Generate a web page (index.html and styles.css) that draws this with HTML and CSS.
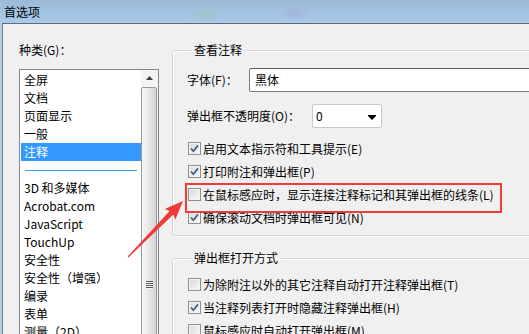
FILE: index.html
```html
<!DOCTYPE html>
<html lang="zh-CN">
<head>
<meta charset="utf-8">
<title>首选项</title>
<link rel="stylesheet" href="styles.css">
</head>
<body>
<div class="window">
  <div class="titlebar"><span class="title">首选项</span></div>
  <div class="frame">
    <div class="dialog">
      <div class="left">
        <div class="label">种类(G)：</div>
        <div class="listbox">
          <ul class="items">
            <li>全屏</li>
            <li>文档</li>
            <li>页面显示</li>
            <li>一般</li>
            <li class="selected">注释</li>
            <li class="sep"><span class="sep-line"></span></li>
            <li>3D 和多媒体</li>
            <li>Acrobat.com</li>
            <li>JavaScript</li>
            <li>TouchUp</li>
            <li>安全性</li>
            <li>安全性（增强）</li>
            <li>编录</li>
            <li>表单</li>
            <li>测量（2D）</li>
          </ul>
          <div class="scrollbar">
            <div class="sb-up"><svg width="7" height="4" viewBox="0 0 7 4"><path d="M3.5 0 L7 4 L0 4 Z" fill="#3a3a3a"/></svg></div>
            <div class="sb-thumb"><span class="grip"></span></div>
          </div>
        </div>
      </div>
      <div class="right">
        <fieldset class="group g1">
          <legend>查看注释</legend>
          <div class="field-row font-row">
            <span class="flabel w1">字体(F)：</span>
            <div class="textbox">黑体</div>
          </div>
          <div class="field-row opacity-row">
            <span class="flabel w2">弹出框不透明度(O)：</span>
            <div class="select"><span>0</span><svg class="dd" width="8" height="5" viewBox="0 0 8 5"><path d="M0 0 H8 V1 L4 5 L0 1 Z" fill="#000"/></svg></div>
          </div>
          <div class="cbs">
            <div class="cb-row"><span class="cb checked"><svg viewBox="0 0 11 11"><path d="M2 5.5 L4.4 8.2 L9 2.4" fill="none" stroke="#44598c" stroke-width="1.7"/></svg></span><span>启用文本指示符和工具提示(E)</span></div>
            <div class="cb-row"><span class="cb checked"><svg viewBox="0 0 11 11"><path d="M2 5.5 L4.4 8.2 L9 2.4" fill="none" stroke="#44598c" stroke-width="1.7"/></svg></span><span>打印附注和弹出框(P)</span></div>
            <div class="cb-row"><span class="cb"></span><span>在鼠标感应时，显示连接注释标记和其弹出框的线条(L)</span></div>
            <div class="cb-row"><span class="cb checked"><svg viewBox="0 0 11 11"><path d="M2 5.5 L4.4 8.2 L9 2.4" fill="none" stroke="#44598c" stroke-width="1.7"/></svg></span><span>确保滚动文档时弹出框可见(N)</span></div>
          </div>
        </fieldset>
        <fieldset class="group g2">
          <legend>弹出框打开方式</legend>
          <div class="cbs">
            <div class="cb-row"><span class="cb"></span><span>为除附注以外的其它注释自动打开注释弹出框(T)</span></div>
            <div class="cb-row"><span class="cb checked"><svg viewBox="0 0 11 11"><path d="M2 5.5 L4.4 8.2 L9 2.4" fill="none" stroke="#44598c" stroke-width="1.7"/></svg></span><span>当注释列表打开时隐藏注释弹出框(H)</span></div>
            <div class="cb-row"><span class="cb"></span><span>鼠标感应时自动打开弹出框(M)</span></div>
          </div>
        </fieldset>
      </div>
    </div>
  </div>
  <div class="highlight"></div>
  <svg class="arrow" width="529" height="334" viewBox="0 0 529 334">
    <g transform="translate(128 257) rotate(-45.5)">
      <path d="M0 -0.6 L62 -2.6 L60 -7.5 L78.5 0 L60 7.5 L62 2.6 L0 0.6 Z" fill="#ee3b36"/>
    </g>
  </svg>
</div>
</body>
</html>
```
FILE: styles.css
```css
* { box-sizing: border-box; margin: 0; padding: 0; }
html, body { width: 529px; height: 334px; overflow: hidden; }
body {
  font-family: "Noto Sans CJK SC", "Noto Sans", sans-serif;
  font-size: 12px;
  color: #000;
  background: #f0f0f0;
}
.window {
  position: relative;
  width: 529px;
  height: 334px;
  overflow: hidden;
  background: #b9cbde;
}
.titlebar {
  height: 23px;
  padding-left: 4px;
  display: flex;
  align-items: center;
  background:
    radial-gradient(ellipse 18px 8px at 205px 15px, rgba(150,190,150,0.35), transparent),
    radial-gradient(ellipse 16px 8px at 295px 14px, rgba(170,150,210,0.35), transparent),
    linear-gradient(#9cbad7, #a9caea);
}
.title { line-height: 14px; }
.frame { padding-left: 2px; height: 311px; }
.dialog {
  height: 100%;
  background: #f0f0f0;
  border-top: 1px solid #5f6b78;
  border-left: 1px solid #737e8a;
  display: flex;
  gap: 13px;
  padding: 19px 0 0 16px;
}
.left { width: 140px; flex: none; }
.label { line-height: 14px; margin-bottom: 12px; }
.listbox {
  border: 1px solid #828790;
  background: #fff;
  display: flex;
  height: 400px;
}
.items {
  list-style: none;
  width: 121px;
  padding-top: 1px;
}
.items li {
  height: 18px;
  line-height: 18px;
  margin-left: 1px;
  width: 120px;
  padding-left: 3px;
  white-space: nowrap;
}
.items li.selected { background: #3399ff; color: #fff; }
.items li.sep { padding-top: 9px; padding-left: 4px; }
.sep-line { display: block; width: 112px; height: 1px; background: #3f9bf5; }
.scrollbar {
  width: 17px;
  background: #f3f3f3;
  display: flex;
  flex-direction: column;
}
.sb-up {
  height: 17px;
  display: flex;
  align-items: center;
  justify-content: center;
  padding-top: 1px;
}
.sb-thumb {
  margin: 2px 1px 0 0;
  height: 400px;
  border: 1px solid #999;
  border-radius: 2px;
  background: linear-gradient(90deg, #f6f6f6, #e9e9e9 45%, #d3d3d3);
  padding-top: 193px;
  display: flex;
  justify-content: center;
}
.grip {
  display: block;
  width: 7px;
  height: 8px;
  background: repeating-linear-gradient(#555 0 1px, #f8f8f8 1px 2px);
}
.right { width: 380px; flex: none; }
.group {
  border: 1px solid #d3d6d9;
  border-radius: 3px;
  box-shadow: 1px 1px 0 #fff, inset 1px 1px 0 #fff;
  min-width: 0;
  width: 380px;
}
.group legend {
  margin-left: 4px;
  padding: 0 3px;
  line-height: 14px;
}
.g1 { padding: 11px 0 6px 14px; }
.g2 { margin-top: 15px; padding: 8px 0 20px 14px; }
.field-row { display: flex; align-items: center; height: 24px; }
.flabel { line-height: 14px; flex: none; }
.w1 { width: 62px; }
.w2 { width: 125px; }
.textbox {
  flex: 1;
  height: 24px;
  line-height: 22px;
  padding-left: 5px;
  background: #fff;
  border: 1px solid #7b7b7b;
  border-top-color: #626262;
  border-radius: 2px 0 0 2px;
}
.opacity-row { margin-top: 12px; }
.select {
  width: 70px;
  height: 24px;
  background: #fff;
  border: 1px solid #c9c9c9;
  border-radius: 2px;
  display: flex;
  align-items: center;
  justify-content: space-between;
  padding: 0 5px 0 3px;
  line-height: 14px;
}
.dd { margin-top: 2px; }
.cbs { margin-top: 9px; padding-left: 1px; }
.g2 .cbs { margin-top: 0; }
.cb-row {
  height: 23px;
  display: flex;
  align-items: center;
  gap: 2px;
  line-height: 14px;
  white-space: nowrap;
}
.cb {
  width: 13px;
  height: 13px;
  flex: none;
  border: 1px solid #8e8f8f;
  background: linear-gradient(135deg, #d8d8d8, #f9f9f9);
  box-shadow: inset 0 0 0 1px #f4f4f4;
  display: flex;
  align-items: center;
  justify-content: center;
}
.cb svg { width: 11px; height: 11px; display: block; }
.highlight {
  position: absolute;
  left: 185px;
  top: 183px;
  width: 317px;
  height: 30px;
  border: 2px solid #ee3b3b;
  pointer-events: none;
}
.arrow {
  position: absolute;
  left: 0;
  top: 0;
  pointer-events: none;
}
```
